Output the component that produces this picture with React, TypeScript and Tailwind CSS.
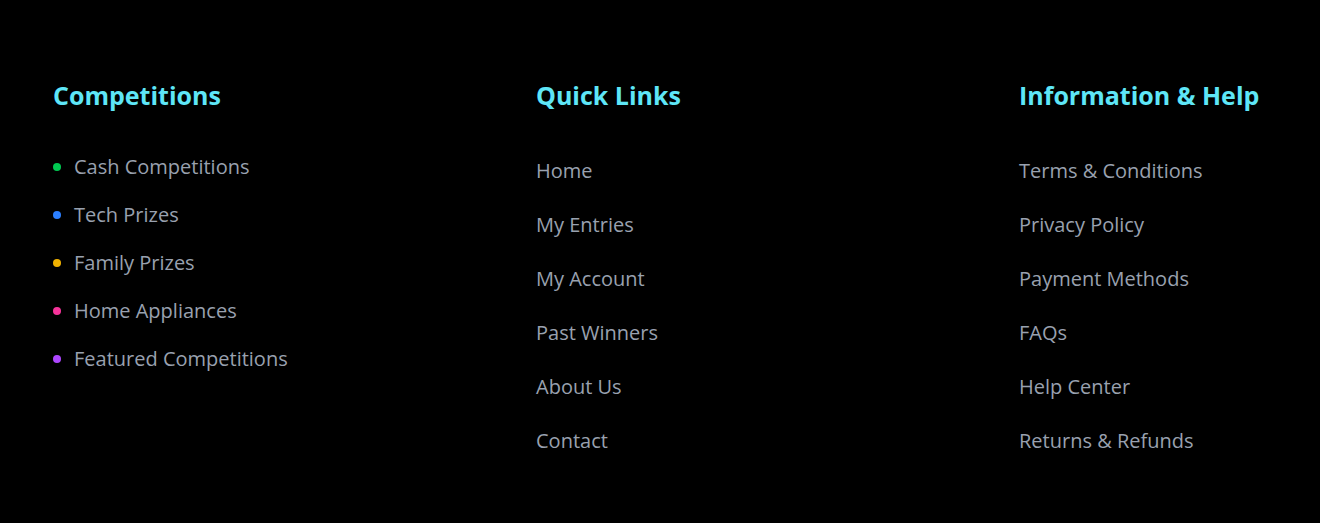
import { ReactNode } from 'react';

const competitions = [
    { label: 'Cash Competitions', dot: 'bg-green-500' },
    { label: 'Tech Prizes', dot: 'bg-blue-500' },
    { label: 'Family Prizes', dot: 'bg-yellow-500' },
    { label: 'Home Appliances', dot: 'bg-pink-500' },
    { label: 'Featured Competitions', dot: 'bg-purple-500' },
];

const quickLinks = ['Home', 'My Entries', 'My Account', 'Past Winners', 'About Us', 'Contact'];

const helpLinks = [
    'Terms & Conditions',
    'Privacy Policy',
    'Payment Methods',
    'FAQs',
    'Help Center',
    'Returns & Refunds',
];

const Heading = ({ children }: { children: ReactNode }) => (
    <h3 className="whitespace-nowrap text-[25px] leading-8 font-bold text-[#5ee6f7] mb-[42px]">
        {children}
    </h3>
);

const LinkList = ({ items }: { items: string[] }) => (
    <ul className="flex flex-col gap-[18px]">
        {items.map((item) => (
            <li key={item}>
                <a href="#" className="block py-1 text-xl leading-7 text-gray-400 hover:text-cyan-300">
                    {item}
                </a>
            </li>
        ))}
    </ul>
);

export default function App() {
    return (
        <footer
            className="min-h-[523px] w-full bg-black px-[53px] pt-[79px]"
            style={{ fontFamily: '"Open Sans", "Noto Sans", sans-serif' }}
        >
            <div className="grid grid-cols-3 gap-x-[235px]">
                <div>
                    <Heading>Competitions</Heading>
                    <ul className="flex flex-col gap-5">
                        {competitions.map((c) => (
                            <li key={c.label} className="flex items-center gap-[13px]">
                                <span className={`h-2 w-2 shrink-0 rounded-full ${c.dot}`} />
                                <a href="#" className="whitespace-nowrap text-xl leading-7 text-gray-400 hover:text-cyan-300">
                                    {c.label}
                                </a>
                            </li>
                        ))}
                    </ul>
                </div>
                <div>
                    <Heading>Quick Links</Heading>
                    <LinkList items={quickLinks} />
                </div>
                <div>
                    <Heading>Information &amp; Help</Heading>
                    <LinkList items={helpLinks} />
                </div>
            </div>
        </footer>
    );
}
